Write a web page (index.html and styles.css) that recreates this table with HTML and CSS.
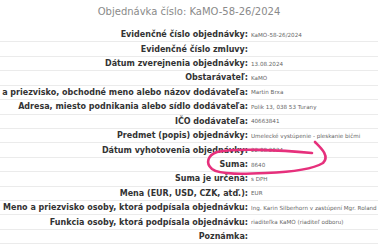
FILE: index.html
```html
<!DOCTYPE html>
<html lang="sk">
<head>
<meta charset="utf-8">
<title>Objednávka číslo: KaMO-58-26/2024</title>
<link rel="stylesheet" href="styles.css">
</head>
<body>
<div class="page">
  <h1 class="title">Objednávka číslo: KaMO-58-26/2024</h1>
  <div class="detail">
    <div class="row"><div class="label"><span>Evidenčné číslo objednávky:</span></div><div class="value">KaMO-58-26/2024</div></div>
    <div class="row"><div class="label"><span>Evidenčné číslo zmluvy:</span></div><div class="value"></div></div>
    <div class="row"><div class="label"><span>Dátum zverejnenia objednávky:</span></div><div class="value">13.08.2024</div></div>
    <div class="row"><div class="label"><span>Obstarávateľ:</span></div><div class="value">KaMO</div></div>
    <div class="row"><div class="label"><span>Meno a priezvisko, obchodné meno alebo názov dodávateľa:</span></div><div class="value">Martin Brxa</div></div>
    <div class="row"><div class="label"><span>Adresa, miesto podnikania alebo sídlo dodávateľa:</span></div><div class="value">Polik 13, 038 53 Turany</div></div>
    <div class="row"><div class="label"><span>IČO dodávateľa:</span></div><div class="value">40663841</div></div>
    <div class="row"><div class="label"><span>Predmet (popis) objednávky:</span></div><div class="value">Umelecké vystúpenie - pleskanie bičmi</div></div>
    <div class="row"><div class="label"><span>Dátum vyhotovenia objednávky:</span></div><div class="value">22.08.2024</div></div>
    <div class="row"><div class="label"><span>Suma:</span></div><div class="value">8640</div></div>
    <div class="row"><div class="label"><span>Suma je určená:</span></div><div class="value">s DPH</div></div>
    <div class="row"><div class="label"><span>Mena (EUR, USD, CZK, atď.):</span></div><div class="value">EUR</div></div>
    <div class="row"><div class="label"><span>Meno a priezvisko osoby, ktorá podpísala objednávku:</span></div><div class="value">Ing. Karin Silberhorn v zastúpení Mgr. Roland</div></div>
    <div class="row"><div class="label"><span>Funkcia osoby, ktorá podpísala objednávku:</span></div><div class="value">riaditeľka KaMO (riaditeľ odboru)</div></div>
    <div class="row"><div class="label"><span>Poznámka:</span></div><div class="value"></div></div>
  </div>
  <svg class="scribble" width="378" height="252" viewBox="0 0 378 252" aria-hidden="true">
    <path d="M315,142 C321,148 330,156 323,163 C313,169 291,172 266,173 C245,174 220,175 212,169 C205,163 208,155 217,152 C236,148 280,150 312,153" fill="none" stroke="#e6307c" stroke-width="2.6" stroke-linecap="round" stroke-linejoin="round"/>
  </svg>
</div>
</body>
</html>
```

FILE: styles.css
```css
html, body {
  margin: 0;
  padding: 0;
  background: #ffffff;
  overflow: hidden;
}

.page {
  position: relative;
  width: 378px;
  height: 252px;
  overflow: hidden;
  font-family: "DejaVu Sans", Verdana, sans-serif;
}

.title {
  margin: 0;
  height: 28px;
  line-height: 24px;
  font-size: 10px;
  font-weight: normal;
  color: #8a8a8a;
  text-align: center;
  white-space: nowrap;
}

.detail {
  display: flex;
  flex-direction: column;
}

.row {
  display: grid;
  grid-template-columns: 248px 1fr;
  column-gap: 3px;
  height: 14.43px;
  box-sizing: border-box;
  border-bottom: 1px solid #ebebeb;
  align-items: center;
}

.label {
  display: flex;
  justify-content: flex-end;
  white-space: nowrap;
  font-size: 8px;
  font-weight: bold;
  color: #333333;
}

.value {
  white-space: nowrap;
  overflow: hidden;
  font-size: 5.6px;
  color: #666666;
}

.scribble {
  position: absolute;
  top: 0;
  left: 0;
  pointer-events: none;
}
```
